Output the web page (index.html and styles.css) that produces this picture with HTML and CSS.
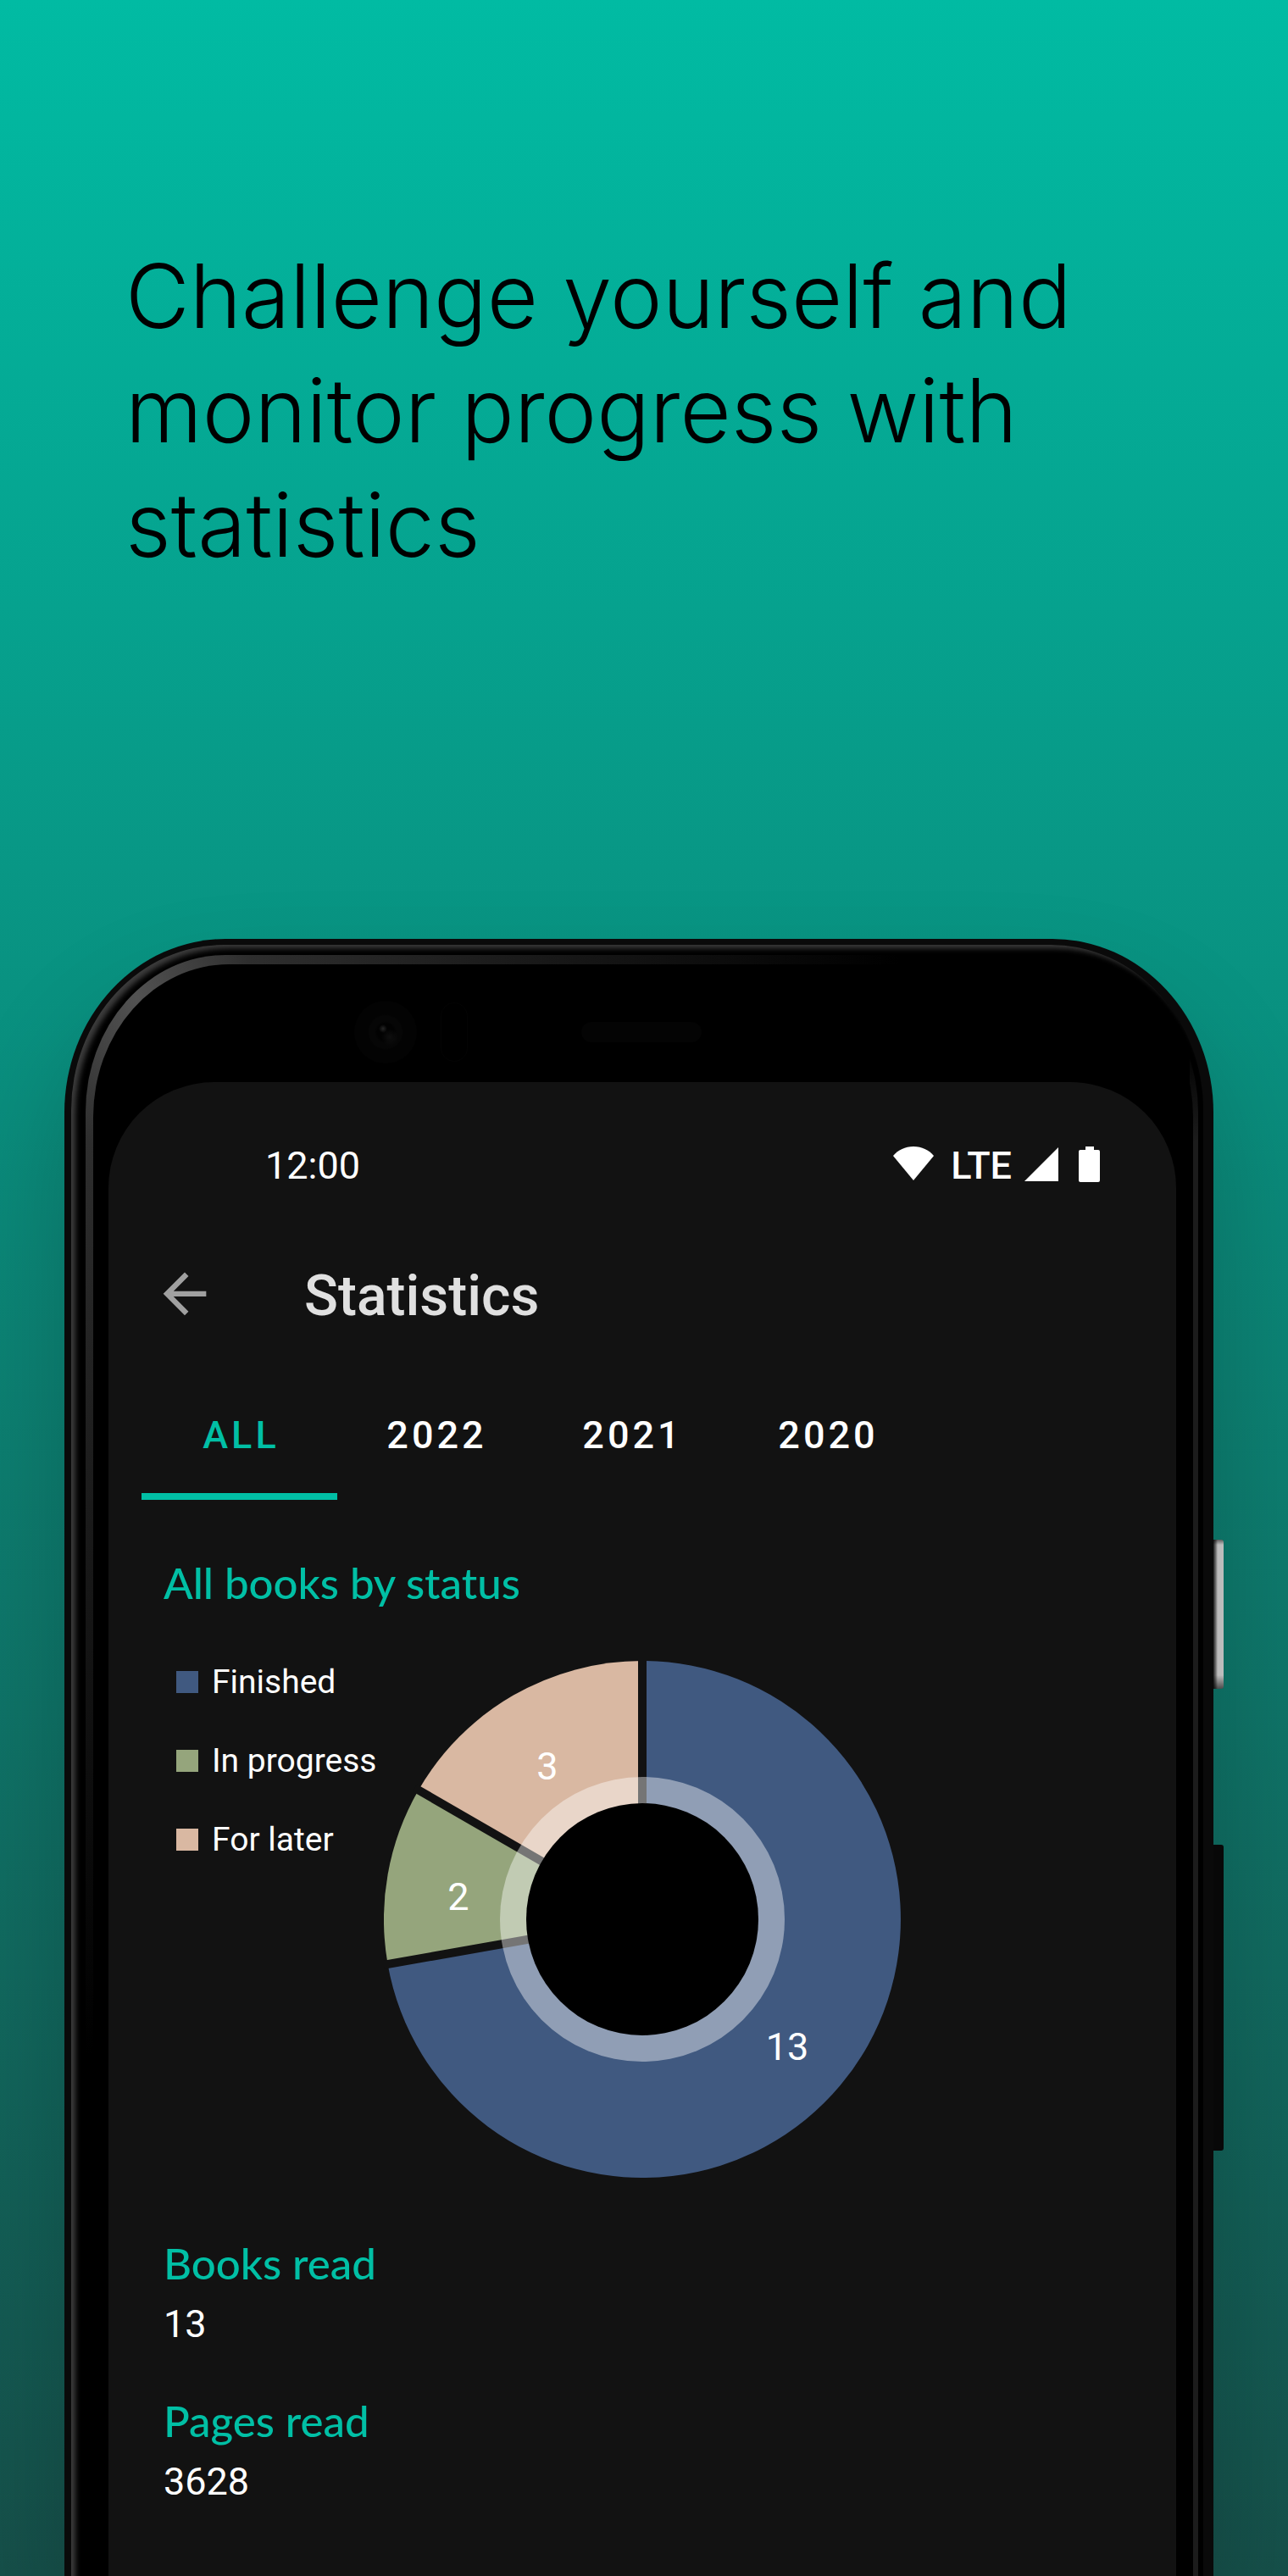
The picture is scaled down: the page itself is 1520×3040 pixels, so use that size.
FILE: index.html
```html
<!DOCTYPE html>
<html lang="en">
<head>
  <meta charset="utf-8">
  <meta name="viewport" content="width=device-width, initial-scale=1">
  <title>Reading statistics</title>
  <link rel="stylesheet" href="styles.css">
</head>
<body>
  <main class="promo">
    <h1 class="headline">Challenge yourself and monitor progress with statistics</h1>

    <div class="phone">
      <span class="key key-power"></span>
      <span class="key key-volume"></span>
      <div class="rim">
        <div class="bevel">
          <div class="face">
            <div class="bezel">
              <span class="camera"></span>
              <span class="sensor"></span>
              <span class="earpiece"></span>
            </div>

            <div class="screen">
              <div class="status-bar">
                <span>12:00</span>
                <div class="status-icons">
                  <svg class="icon-wifi" viewBox="0 0 48 48" aria-hidden="true"><path d="M0 12C6 5 14 1 24 1s18 4 24 11L24 41z"/></svg>
                  <span class="network">LTE</span>
                  <svg class="icon-signal" viewBox="0 0 40 48" aria-hidden="true"><path d="M0 42 40 2v40z"/></svg>
                  <svg class="icon-battery" viewBox="0 0 25 48" aria-hidden="true"><path d="M8 1h10v4h5q2 0 2 2v34q0 2-2 2H2q-2 0-2-2V7q0-2 2-2h6z"/></svg>
                </div>
              </div>

              <header class="app-bar">
                <button class="back" type="button" aria-label="Back">
                  <svg viewBox="0 1 24 24" aria-hidden="true"><path d="M20 11H7.83l5.59-5.59L12 4l-8 8 8 8 1.41-1.41L7.83 13H20v-2z"/></svg>
                </button>
                <h2 class="title">Statistics</h2>
              </header>

              <nav class="tabs" role="tablist">
                <button class="tab tab-active" type="button" role="tab" aria-selected="true">ALL</button>
                <button class="tab" type="button" role="tab" aria-selected="false">2022</button>
                <button class="tab" type="button" role="tab" aria-selected="false">2021</button>
                <button class="tab" type="button" role="tab" aria-selected="false">2020</button>
              </nav>

              <section class="status-section">
                <h3 class="section-title">All books by status</h3>
                <div class="chart">
                  <ul class="legend">
                    <li class="legend-item"><span class="swatch swatch-finished"></span>Finished</li>
                    <li class="legend-item"><span class="swatch swatch-progress"></span>In progress</li>
                    <li class="legend-item"><span class="swatch swatch-later"></span>For later</li>
                  </ul>
                  <svg class="pie" viewBox="-305 -305 610 610" role="img" aria-label="Finished 13, in progress 2, for later 3">
                    <path class="slice-finished" d="M0 0V-305A305 305 0 1 1 -300.4 53z"/>
                    <path class="slice-progress" d="M0 0L-300.4 53A305 305 0 0 1 -264.1 -152.5z"/>
                    <path class="slice-later" d="M0 0L-264.1 -152.5A305 305 0 0 1 0 -305z"/>
                    <path class="gaps" d="M0 0V-310M0 0L-305.3 53.8M0 0L-268.5 -155"/>
                    <circle class="halo" r="168"/>
                    <circle class="hole" r="137"/>
                    <text x="171" y="166">13</text>
                    <text x="-217" y="-11">2</text>
                    <text x="-112" y="-165">3</text>
                  </svg>
                </div>
              </section>

              <dl class="totals">
                <div class="total">
                  <dt class="section-title">Books read</dt>
                  <dd>13</dd>
                </div>
                <div class="total">
                  <dt class="section-title">Pages read</dt>
                  <dd>3628</dd>
                </div>
              </dl>
            </div>
          </div>
        </div>
      </div>
    </div>
  </main>
</body>
</html>
```
FILE: styles.css
```css
:root {
  --accent: #01bfa5;
  --surface: #121212;
  --finished: #405980;
  --progress: #95a57c;
  --later: #d9b8a2;
}

* {
  box-sizing: border-box;
}

body {
  margin: 0;
  font-family: Roboto, "Liberation Sans", sans-serif;
  color: #fff;
}

h1, h2, h3, ul, dl, dd {
  margin: 0;
  padding: 0;
}

button {
  border: 0;
  padding: 0;
  background: none;
  font: inherit;
  color: inherit;
}

.promo {
  display: flex;
  flex-direction: column;
  min-height: 100vh;
  overflow: hidden;
  background: linear-gradient(#01bba3, #16504a);
}

.headline {
  padding: 282px 150px 421px 148px;
  font-family: Inter, "Open Sans", sans-serif;
  font-size: 104px;
  font-weight: 300;
  line-height: 135px;
  color: #000;
}

/* Phone body */

.phone {
  position: relative;
  flex: 1;
  display: flex;
  margin: 0 88px 0 76px;
  padding: 7px 12px 0 8px;
  border-radius: 190px 190px 0 0 / 205px 205px 0 0;
  background: #0a0a0a;
  box-shadow: 0 80px 140px rgba(0, 0, 0, 0.2);
}

.rim {
  flex: 1;
  display: flex;
  padding: 12px 6px 0 17px;
  border-radius: 180px 180px 0 0 / 195px 195px 0 0;
  background: #000;
  box-shadow: inset 6px 5px 6px -1px #3c3c3c;
}

.bevel {
  flex: 1;
  display: flex;
  padding: 11px 6px 0 9px;
  border-radius: 165px 165px 0 0 / 185px 185px 0 0;
  background:
    linear-gradient(transparent 100px, #1c1c1c 220px) right / 10px 100% no-repeat,
    radial-gradient(900px 1250px at 60px 50px, #525252, #2e2e2e 15%, #1a1a1a 50%, #000);
}

.face {
  flex: 1;
  display: flex;
  flex-direction: column;
  padding: 0 20px 0 18px;
  border-radius: 160px 160px 0 0 / 180px 180px 0 0;
  background: #000;
}

.bezel {
  display: flex;
  align-items: center;
  height: 139px;
  padding: 20px 0 0 290px;
}

.camera {
  width: 74px;
  height: 74px;
  border-radius: 50%;
  background:
    radial-gradient(circle at 34px 33px, #262626, transparent 5px),
    radial-gradient(circle at 42px 43px, #0f0f0f, transparent 10px),
    radial-gradient(circle, #020202 10px, #060606 13px 19px, #030303 21px);
}

.sensor {
  width: 32px;
  height: 70px;
  margin-left: 28px;
  border: 1px solid #040404;
  border-radius: 16px;
}

.earpiece {
  width: 142px;
  height: 24px;
  margin-left: 134px;
  border-radius: 12px;
  background: #040404;
}

.key {
  position: absolute;
  left: 100%;
  width: 12px;
  border-radius: 0 3px 3px 0;
}

.key-power {
  top: 709px;
  height: 176px;
  background:
    linear-gradient(rgba(0, 0, 0, 0.5), transparent 6px 160px, rgba(0, 0, 0, 0.6)),
    linear-gradient(90deg, #222, #777 3px, #bcbcbc 5px);
}

.key-volume {
  top: 1069px;
  height: 361px;
  background: #080808;
}

/* App screen */

.screen {
  flex: 1;
  padding: 72px 0 85px;
  border-radius: 125px 125px 0 0;
  background: var(--surface);
}

.status-bar {
  display: flex;
  justify-content: space-between;
  padding: 0 90px 0 185px;
  font-size: 45px;
  line-height: 54px;
}

.status-icons {
  display: flex;
  align-items: center;
}

.status-icons svg {
  height: 48px;
  fill: #fff;
}

.network {
  margin: 0 15px 0 20px;
  font-weight: 500;
}

.icon-wifi {
  width: 48px;
}

.icon-signal {
  width: 40px;
}

.icon-battery {
  width: 25px;
  margin-left: 24px;
}

.app-bar {
  display: flex;
  align-items: center;
  gap: 103px;
  padding: 89px 52px 0;
}

.back {
  width: 76px;
  height: 76px;
}

.back svg {
  display: block;
  fill: #a0a0a0;
}

.title {
  font-size: 66px;
  font-weight: 500;
  line-height: 76px;
  color: #e0e0e0;
}

.tabs {
  display: flex;
  padding: 58px 39px 0;
}

.tab {
  min-width: 231px;
  padding: 41px 0 41px 4px;
  border-bottom: 8px solid transparent;
  font-size: 45px;
  font-weight: 500;
  line-height: 54px;
  letter-spacing: 4px;
}

.tab-active {
  border-color: var(--accent);
  color: var(--accent);
}

.status-section {
  padding-top: 66px;
}

.section-title {
  padding: 0 65px;
  font-family: Lato, "Open Sans", sans-serif;
  font-size: 51px;
  font-weight: 500;
  line-height: 64px;
  color: var(--accent);
}

.chart {
  display: grid;
  grid-template-columns: 1fr 610px 1fr;
  padding-top: 60px;
}

.legend {
  display: flex;
  flex-direction: column;
  gap: 47px;
  padding: 2px 0 0 80px;
  list-style: none;
}

.legend-item {
  display: flex;
  align-items: center;
  gap: 16px;
  font-size: 39px;
  line-height: 46px;
  white-space: nowrap;
}

.swatch {
  width: 26px;
  height: 26px;
}

.swatch-finished {
  background: var(--finished);
}

.swatch-progress {
  background: var(--progress);
}

.swatch-later {
  background: var(--later);
}

.pie {
  display: block;
  width: 100%;
}

.pie text {
  font-size: 45px;
  text-anchor: middle;
  fill: #fff;
}

.slice-finished {
  fill: var(--finished);
}

.slice-progress {
  fill: var(--progress);
}

.slice-later {
  fill: var(--later);
}

.gaps {
  stroke: var(--surface);
  stroke-width: 10;
}

.halo {
  fill: #fff;
  fill-opacity: 0.42;
}

.hole {
  fill: #000;
}

.totals {
  display: flex;
  flex-direction: column;
  gap: 55px;
  padding-top: 69px;
}

.total dd {
  padding: 13px 65px 0;
  font-size: 45px;
  line-height: 54px;
}
```
